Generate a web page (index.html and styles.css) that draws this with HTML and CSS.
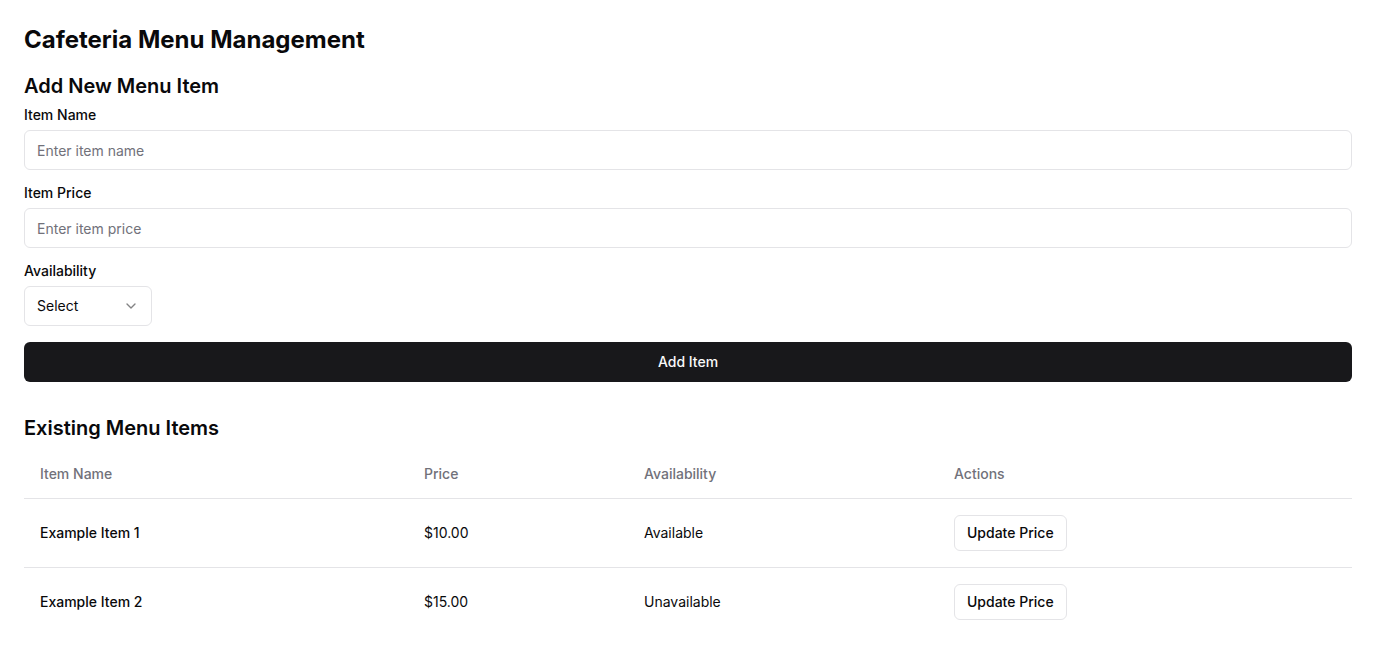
FILE: index.html
```html
<!DOCTYPE html>
<html lang="en">
<head>
<meta charset="utf-8">
<title>Cafeteria Menu Management</title>
<link rel="stylesheet" href="styles.css">
</head>
<body>
<main class="page">
  <h1 class="title">Cafeteria Menu Management</h1>
  <section class="add-form">
    <h2 class="section-title">Add New Menu Item</h2>
    <div class="field">
      <label class="label" for="name">Item Name</label>
      <input class="input" id="name" type="text" placeholder="Enter item name">
    </div>
    <div class="field">
      <label class="label" for="price">Item Price</label>
      <input class="input" id="price" type="text" placeholder="Enter item price">
    </div>
    <div class="field">
      <label class="label">Availability</label>
      <button class="select" type="button">
        <span>Select</span>
        <svg class="chev" width="16" height="16" viewBox="0 0 24 24" fill="none" stroke="currentColor" stroke-width="2" stroke-linecap="round" stroke-linejoin="round"><path d="m6 9 6 6 6-6"/></svg>
      </button>
    </div>
    <button class="primary" type="button">Add Item</button>
  </section>
  <section class="list">
    <h2 class="section-title list-title">Existing Menu Items</h2>
    <table class="table">
      <thead>
        <tr>
          <th class="c-name">Item Name</th>
          <th class="c-price">Price</th>
          <th class="c-avail">Availability</th>
          <th class="c-act">Actions</th>
        </tr>
      </thead>
      <tbody>
        <tr>
          <td class="strong">Example Item 1</td>
          <td>$10.00</td>
          <td>Available</td>
          <td><button class="outline" type="button">Update Price</button></td>
        </tr>
        <tr>
          <td class="strong">Example Item 2</td>
          <td>$15.00</td>
          <td>Unavailable</td>
          <td><button class="outline" type="button">Update Price</button></td>
        </tr>
      </tbody>
    </table>
  </section>
</main>
</body>
</html>
```
FILE: styles.css
```css
* { box-sizing: border-box; }
html, body { margin: 0; padding: 0; background: #fff; }
body {
  font-family: Inter, "Liberation Sans", sans-serif;
  color: #09090b;
  font-size: 14px;
  line-height: 20px;
}
.page { padding: 24px; }
.title {
  margin: 0 0 16px;
  font-size: 24px;
  line-height: 32px;
  font-weight: 700;
}
.section-title {
  margin: 0 0 8px;
  font-size: 20px;
  line-height: 28px;
  font-weight: 600;
}
.add-form { display: flex; flex-direction: column; }
.field { display: flex; flex-direction: column; gap: 8px; margin-bottom: 16px; }
.label { font-size: 14px; line-height: 14px; font-weight: 500; }
.input {
  height: 40px;
  width: 100%;
  border: 1px solid #e4e4e7;
  border-radius: 6px;
  padding: 0 12px;
  font: inherit;
  color: #09090b;
  background: #fff;
  outline: none;
}
.input::placeholder { color: #71717a; }
.select {
  width: 128px;
  height: 40px;
  border: 1px solid #e4e4e7;
  border-radius: 6px;
  padding: 0 12px;
  background: #fff;
  font: inherit;
  color: #09090b;
  display: flex;
  align-items: center;
  justify-content: space-between;
}
.chev { opacity: 0.5; }
.primary {
  height: 40px;
  width: 100%;
  border: none;
  border-radius: 6px;
  background: #18181b;
  color: #fafafa;
  font: inherit;
  font-weight: 500;
}
.list { margin-top: 32px; }
.table { width: 100%; border-collapse: collapse; }
.table th {
  height: 48px;
  padding: 0 16px;
  text-align: left;
  font-weight: 500;
  color: #71717a;
  border-bottom: 1px solid #e4e4e7;
}
.table td {
  padding: 16px;
  height: 68px;
  border-bottom: 1px solid #e4e4e7;
}
.table tbody tr:last-child td { border-bottom: none; }
.c-name { width: 384px; }
.c-price { width: 220px; }
.c-avail { width: 310px; }
.strong { font-weight: 500; }
.outline {
  height: 36px;
  padding: 0 12px;
  border: 1px solid #e4e4e7;
  border-radius: 6px;
  background: #fff;
  font: inherit;
  font-weight: 500;
  color: #09090b;
}
```
